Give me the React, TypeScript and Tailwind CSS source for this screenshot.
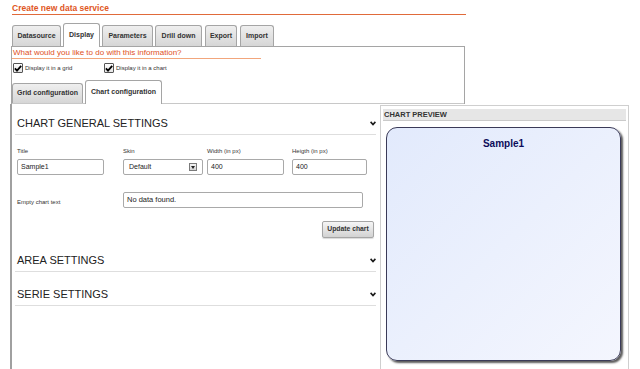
import React from "react";

const Chevron = () => (
  <svg width="6" height="5" viewBox="0 0 6 5" className="block">
    <path d="M0.6 0.9 L3 3.5 L5.4 0.9" fill="none" stroke="#1a1a1a" strokeWidth="1.6" />
  </svg>
);

const Check = () => (
  <span className="w-[10px] h-[10px] border border-[#555] rounded-[1px] bg-linear-to-b from-white to-[#e4e4e4] flex items-center justify-center shrink-0">
    <svg width="8" height="7" viewBox="0 0 8 7" className="block">
      <path d="M0.9 3.4 L3 5.6 L7.2 0.9" fill="none" stroke="#000" strokeWidth="1.8" />
    </svg>
  </span>
);

const tabs = [
  { label: "Datasource", w: "w-[49px]", ml: "ml-0", active: false },
  { label: "Display", w: "w-[37px]", ml: "ml-[2px]", active: true },
  { label: "Parameters", w: "w-[51px]", ml: "ml-[2px]", active: false },
  { label: "Drill down", w: "w-[47px]", ml: "ml-[2px]", active: false },
  { label: "Export", w: "w-[32px]", ml: "ml-[3px]", active: false },
  { label: "Import", w: "w-[34px]", ml: "ml-[3px]", active: false },
];

function Tab({ label, w, ml, active }: { label: string; w: string; ml: string; active: boolean }) {
  return active ? (
    <div
      className={`${w} ${ml} h-[24px] mb-[-1px] relative z-10 bg-white border border-b-0 border-[#a5a5a5] rounded-t-[3px] flex items-center justify-center text-[7px] font-bold text-[#333]`}
    >
      {label}
    </div>
  ) : (
    <div
      className={`${w} ${ml} h-[21px] bg-linear-to-b from-[#efefef] to-[#d6d6d6] border border-b-0 border-[#a5a5a5] rounded-t-[3px] flex items-center justify-center text-[7px] font-bold text-[#333]`}
    >
      {label}
    </div>
  );
}

function SectionHeader({ title, pt }: { title: string; pt: string }) {
  return (
    <div className={`${pt} pb-[4px] border-b border-[#dedede] flex items-center justify-between pl-[2px]`}>
      <span className="text-[11px] leading-[14px] text-[#222]">{title}</span>
      <Chevron />
    </div>
  );
}

function Field({ label, value, col, w }: { label: string; value: string; col: string; w: string }) {
  return (
    <div className={`${col} shrink-0`}>
      <div className="text-[6px] leading-[8px] text-[#333]">{label}</div>
      <div
        className={`${w} mt-[4px] h-[16px] border border-[#a9a9a9] rounded-[2px] bg-white flex items-center pl-[3px] text-[7px] text-[#222]`}
      >
        {value}
      </div>
    </div>
  );
}

export default function App() {
  return (
    <div className="w-[640px] h-[369px] overflow-hidden bg-white font-['Liberation_Sans',Arial,sans-serif] text-[#222]">
      <div className="pl-[12px] pt-[3px] text-[8.5px] leading-[11px] font-bold text-[#e0561e]">
        Create new data service
      </div>
      <div className="ml-[12px] w-[454px] h-px bg-[#e06a3a]" />

      <div className="ml-[12px] mt-[8px] h-[23px] flex items-end">
        {tabs.map((t) => (
          <Tab key={t.label} {...t} />
        ))}
      </div>

      <div className="ml-[11px] w-[454px] border border-b-0 border-[#a5a5a5] pt-[1px]">
        <div className="w-[249px] border-b border-[#f2a67c] pl-[1px] text-[8px] leading-[10px] text-[#e0501c]">
          What would you like to do with this information?
        </div>
        <div className="mt-[4px] pl-[1px] h-[10px] flex items-center">
          <div className="w-[91px] flex items-center gap-[2px]">
            <Check />
            <span className="text-[6px] leading-[8px] text-[#333]">Display it in a grid</span>
          </div>
          <div className="flex items-center gap-[2px]">
            <Check />
            <span className="text-[6px] leading-[8px] text-[#333]">Display it in a chart</span>
          </div>
        </div>
        <div className="mt-[8px] h-[23px] flex items-end border-b border-[#c8c8c8]">
          <div className="w-[71px] h-[20px] bg-linear-to-b from-[#efefef] to-[#d6d6d6] border border-b-0 border-[#a5a5a5] rounded-t-[3px] flex items-center justify-center text-[7px] font-bold text-[#333]">
            Grid configuration
          </div>
          <div className="w-[77px] ml-[2px] h-[24px] mb-[-1px] relative z-10 bg-white border border-b-0 border-[#a5a5a5] rounded-t-[3px] flex items-center justify-center text-[7px] font-bold text-[#333]">
            Chart configuration
          </div>
        </div>
      </div>

      <div className="h-[265px] flex">
        <div className="ml-[10px] w-[370px] border-l-2 border-[#a0a0a0] pl-[3px] pr-[4px]">
          <SectionHeader title="CHART GENERAL SETTINGS" pt="pt-[12px]" />
          <div className="pl-[2px]">
            <div className="mt-[12px] flex">
              <Field label="Title" value="Sample1" col="w-[106px]" w="w-[87px]" />
              <div className="w-[84px] shrink-0">
                <div className="text-[6px] leading-[8px] text-[#333]">Skin</div>
                <div className="w-[80px] mt-[4px] h-[16px] border border-[#a9a9a9] rounded-[2px] bg-white flex items-center justify-between pl-[5px] pr-[5px] text-[7px] text-[#222]">
                  <span>Default</span>
                  <span className="w-[8px] h-[8px] border border-[#7a7a7a] bg-linear-to-b from-[#f4f4f4] to-[#d4d4d4] flex items-center justify-center">
                    <svg width="4" height="3" viewBox="0 0 4 3" className="block">
                      <path d="M0 0 L4 0 L2 3 Z" fill="#222" />
                    </svg>
                  </span>
                </div>
              </div>
              <Field label="Width (in px)" value="400" col="w-[85px]" w="w-[77px]" />
              <Field label="Heigth (in px)" value="400" col="w-[75px]" w="w-[75px]" />
            </div>
            <div className="mt-[17px] flex items-end">
              <div className="w-[106px] pb-[2px] text-[6px] leading-[8px] text-[#333]">Empty chart text</div>
              <div className="w-[240px] h-[16px] border border-[#a9a9a9] rounded-[2px] bg-white flex items-center pl-[3px] text-[7.5px] text-[#222]">
                No data found.
              </div>
            </div>
            <div className="mt-[13px] flex justify-end pr-[2px]">
              <div className="w-[52px] h-[17px] border border-[#a5a5a5] rounded-[2px] bg-linear-to-b from-[#f6f6f6] to-[#d2d2d2] shadow-[0_1px_1px_rgba(0,0,0,0.15)] flex items-center justify-center text-[6.8px] font-bold text-[#333]">
                Update chart
              </div>
            </div>
          </div>
          <SectionHeader title="AREA SETTINGS" pt="pt-[15px]" />
          <SectionHeader title="SERIE SETTINGS" pt="pt-[15px]" />
        </div>

        <div className="mt-[1px] w-[249px] border border-b-0 border-[#cfcfcf] px-[2px] pt-[3px]">
          <div className="h-[12px] bg-[#e6e6e6] border-b border-[#cacaca] pl-[1px] text-[7.5px] leading-[11px] font-bold text-[#333]">
            CHART PREVIEW
          </div>
          <div className="ml-[3px] mt-[6px] w-[235px] h-[234px] rounded-[11px] border border-[#3a3a58] shadow-[2px_2px_2px_rgba(0,0,0,0.65)] bg-linear-to-br from-[#e2eafc] to-[#f4f6fe] pt-[10px]">
            <div className="text-center text-[10px] leading-[12px] font-bold text-[#0c0c5a]">Sample1</div>
          </div>
        </div>
      </div>
    </div>
  );
}
